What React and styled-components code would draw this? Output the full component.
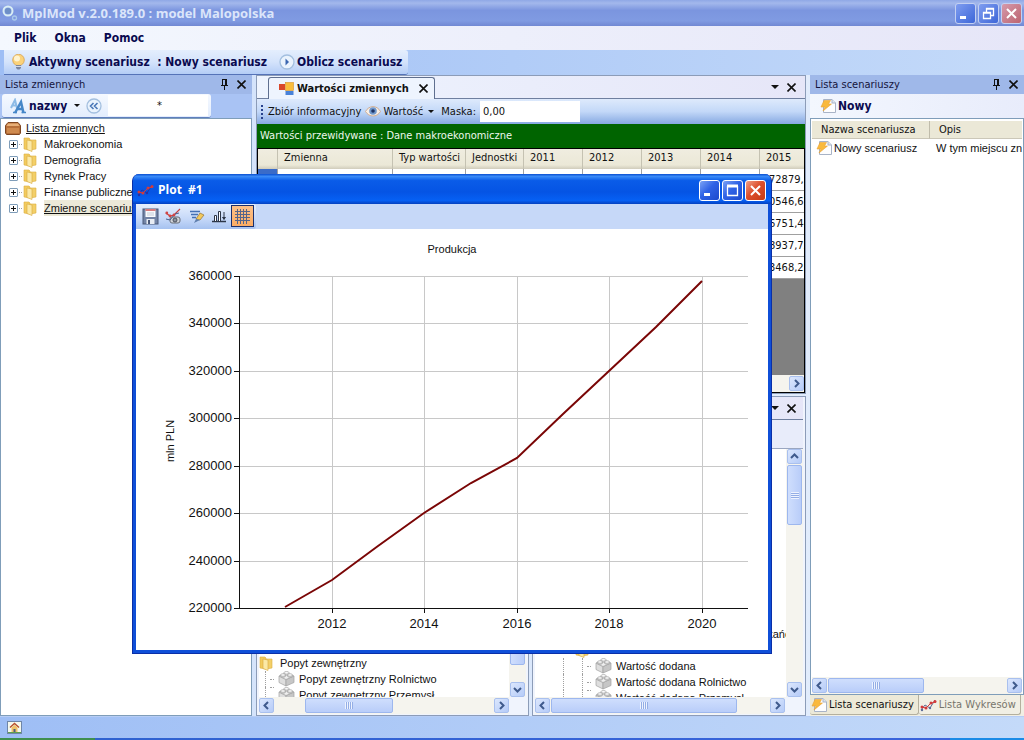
import React from "react";
import styled, { createGlobalStyle, css } from "styled-components";

const Global = createGlobalStyle`
  *, *::before, *::after { box-sizing: border-box; }
  html, body { margin: 0; padding: 0; }
  body { font: 11px/16px "Liberation Sans", Arial, sans-serif; color: #111; overflow: hidden; }
  button, input { font: inherit; color: inherit; margin: 0; padding: 0; border: 0; background: none; }
  button { display: inline-flex; align-items: center; justify-content: center; white-space: nowrap; }
  ul { margin: 0; padding: 0; list-style: none; }
  svg { display: block; flex: none; }
`;

const uiFont = css`font-family: "DejaVu Sans Condensed", "DejaVu Sans", Tahoma, sans-serif;`;

/* ---------- frame ---------- */
const Shell = styled.div`
  position: relative;
  min-height: 100vh;
  display: flex;
  flex-direction: column;
  background: linear-gradient(90deg, #9ebef5, #c4daf9);
`;
const TitleBar = styled.header`
  height: 26px;
  display: flex;
  align-items: center;
  gap: 4px;
  padding: 0 2px;
  background: linear-gradient(#8fa8e6 0, #a3b8ec 12%, #7b95df 40%, #809be2 80%, #7188d3 100%);
  color: #dbe5fa;
`;
const TitleText = styled.h1`
  flex: 1;
  margin: 0;
  font: bold 13px/24px "Open Sans", "Noto Sans", sans-serif;
`;
const CaptionButtons = styled.div`display: flex; gap: 2px;`;
const CaptionButton = styled.button`
  width: 21px;
  height: 21px;
  border: 1px solid ${p => (p.$active ? "#fff" : "#c3d0f2")};
  border-radius: 3px;
  background: ${p => p.$close
    ? (p.$active ? "linear-gradient(135deg, #f0a088, #dd4f2c 45%, #c63a14)" : "linear-gradient(135deg, #d59aab, #bd6470)")
    : (p.$active ? "linear-gradient(135deg, #7ba2f5, #2f62e6 45%, #1c49cc)" : "linear-gradient(135deg, #7f9df0, #3d66d8)")};
`;
const MenuBar = styled.nav`
  height: 24px;
  display: flex;
  align-items: center;
  gap: 18px;
  padding-left: 14px;
  background: linear-gradient(90deg, #f4f8fe, #e6e6f8);
`;
const BoldButton = styled.button`
  ${uiFont}
  font-size: 12px;
  font-weight: bold;
  color: #0a0a50;
  gap: ${p => p.$gap || 0}px;
`;
const ToolRow = styled.div`height: 25px; display: flex; padding-left: 4px;`;
const ToolStrip = styled.div`
  height: 25px;
  display: flex;
  align-items: center;
  padding: 0 6px 0 7px;
  gap: 12px;
  background: linear-gradient(#e4eefd, #d4e3fb 50%, #b4cdf6);
  border-bottom: 1px solid #5573b8;
  border-radius: 0 3px 3px 0;
`;
const Main = styled.main`
  flex: 1;
  display: grid;
  grid-template-columns: 252px minmax(0, 1fr) 214px;
  gap: 4px;
  background: linear-gradient(90deg, #cfe0fb, #e6effc);
`;
const StatusBar = styled.footer`
  height: 22px;
  display: flex;
  align-items: center;
  padding-left: 7px;
  border-top: 1px solid #b7cdf5;
`;
const TaskEdge = styled.div`
  height: 2px;
  background: linear-gradient(90deg, #3f8f4f 95px, #2f62d0 95px, #3a64dc 950px, #1b8be6 950px);
`;

/* ---------- dock panels ---------- */
const Dock = styled.section`display: flex; flex-direction: column; min-width: 0;`;
const DockHead = styled.div`
  ${uiFont}
  height: 19px;
  display: flex;
  align-items: center;
  gap: 8px;
  padding: 0 6px 0 5px;
  background: #9fb8e9;
  h2 { flex: 1; margin: 0; font-size: 11px; font-weight: normal; color: #14143c; }
`;
const DockTools = styled.div`
  height: 24px;
  display: flex;
  align-items: center;
  background: ${p => (p.$light ? "linear-gradient(90deg, #f3f7fe, #e8ecfb)" : "#a9c3f4")};
  padding-left: ${p => (p.$light ? 10 : 2)}px;
`;
const SearchStrip = styled.div`
  height: 24px;
  display: flex;
  align-items: center;
  gap: 6px;
  padding: 0 3px 0 8px;
  background: linear-gradient(#f5f9ff, #e3edfd);
  border-bottom: 1px solid #5f7fbe;
  border-radius: 3px;
`;
const Field = styled.input`
  width: 100px;
  height: 21px;
  background: #fff;
  text-align: ${p => p.$align || "left"};
  padding-left: 3px;
  ${uiFont}
  font-size: 11px;
`;
const Sunken = styled.div`
  flex: 1;
  min-height: 0;
  display: flex;
  flex-direction: column;
  background: #fff;
  border: 1px solid #7f9db9;
  padding: ${p => p.$pad || "0"};
  overflow: hidden;
`;

/* ---------- tree ---------- */
const Tree = styled.ul`
  flex: 1;
  min-width: 0;
  display: flex;
  flex-direction: column;
  justify-content: ${p => (p.$bottom ? "flex-end" : "flex-start")};
  overflow: hidden;
`;
const TreeRow = styled.li`
  height: ${p => p.$cut || 16}px;
  flex: none;
  display: flex;
  align-items: ${p => (p.$cut ? "flex-start" : "center")};
  justify-content: ${p => (p.$end ? "flex-end" : "flex-start")};
  overflow: hidden;
  white-space: nowrap;
  padding-left: ${p => p.$indent || 0}px;
  gap: ${p => p.$gap || 4}px;
`;
const TreeLabel = styled.span`
  text-decoration: ${p => (p.$line ? "underline" : "none")};
  background: ${p => (p.$hot ? "#ece9d8" : "transparent")};
  margin-left: ${p => p.$ml || 0}px;
  margin-right: ${p => (p.$spill ? -10 : 0)}px;
`;
const Expander = styled.button`
  width: 9px;
  height: 9px;
  border: 1px solid #7f9db9;
  border-radius: 1px;
  background: #fff;
`;
const Dots = styled.span`
  width: ${p => p.$w}px;
  border-top: 1px dotted #a0a0a0;
`;
const Stem = styled.span`
  align-self: stretch;
  width: 1px;
  border-left: 1px dotted #a0a0a0;
  margin-right: ${p => p.$mr || 0}px;
`;

/* ---------- documents ---------- */
const Center = styled.div`display: flex; flex-direction: column; gap: 2px; min-width: 0;`;
const DocPane = styled.section`
  display: flex;
  flex-direction: column;
  min-width: 0;
  background: #f0f4fd;
  border: 1px solid #8c9cb8;
  padding: ${p => p.$pad || "0"};
`;
const TabStrip = styled.div`
  height: 23px;
  display: flex;
  align-items: flex-end;
  justify-content: flex-end;
  background: linear-gradient(90deg, #eef4fe, #e6e6f8);
  border-bottom: 1px solid #6f7f9f;
`;
const Tab = styled.button`
  ${uiFont}
  height: 22px;
  margin: 0 auto -1px 11px;
  padding: 0 6px 0 10px;
  gap: 3px;
  font-weight: bold;
  font-size: 11px;
  background: #eef4fe;
  border: 1px solid #5f6f8f;
  border-bottom: 0;
  border-radius: 3px 3px 0 0;
`;
const StripIcons = styled.div`
  display: flex;
  align-items: center;
  align-self: center;
  gap: 8px;
  padding-right: ${p => p.$pr || 9}px;
`;
const DataTools = styled.div`
  ${uiFont}
  height: 25px;
  display: flex;
  align-items: center;
  padding-left: 4px;
  gap: 4px;
  background: linear-gradient(#deeafc, #c3d8f8 50%, #86a9e2);
  white-space: nowrap;
  label { margin-left: 3px; }
`;
const ValueButton = styled.button`gap: 2px;`;
const Grip = styled.i`
  width: 2px;
  height: 14px;
  background: repeating-linear-gradient(#27418c 0 2px, transparent 2px 4px);
  margin-right: 1px;
`;
const Banner = styled.div`
  ${uiFont}
  height: 24px;
  line-height: 22px;
  padding: 1px 0 0 3px;
  background: #006400;
  color: #eef7ee;
`;
const GridBox = styled.div`
  height: 245px;
  display: flex;
  flex-direction: column;
  background: #808080;
  border: 1px solid #000;
  overflow: hidden;
`;
const DataTable = styled.table`
  ${uiFont}
  width: 561px;
  table-layout: fixed;
  border-collapse: separate;
  border-spacing: 0;
  th {
    height: 20px;
    padding: 0 0 2px 6px;
    text-align: left;
    font-weight: normal;
    white-space: nowrap;
    background: linear-gradient(#f0ede0, #ebe8d7 80%, #d0ccbb);
    border-right: 1px solid #c5c2b2;
  }
  td {
    height: 22px;
    padding: 1px 0 0 9px;
    background: #fff;
    border-right: 1px solid #a0a0a0;
    border-bottom: 1px solid #a0a0a0;
    white-space: nowrap;
  }
  td:first-child { background: #3a6bc8; }
`;
const Spacer = styled.div`flex: 1;`;

/* ---------- scroll bars ---------- */
const Scroll = styled.div`
  flex: none;
  display: flex;
  flex-direction: ${p => (p.$v ? "column" : "row")};
  ${p => (p.$v ? "width: 17px;" : "height: 17px;")}
  background: #f5f4ee;
  gap: 1px;
  padding: ${p => (p.$v ? "0 1px" : "1px 0")};
  margin-right: ${p => p.$corner || 0}px;
`;
const ScrollButton = styled.button`
  flex: none;
  width: 15px;
  height: 15px;
  border: 1px solid #a9c0ee;
  border-radius: 2px;
  background: linear-gradient(135deg, #dce7fd, #b5cbf8);
`;
const Thumb = styled.div`
  flex: none;
  display: flex;
  align-items: center;
  justify-content: center;
  ${p => (p.$v ? `height: ${p.$size}px;` : `width: ${p.$size}px;`)}
  ${p => (p.$v ? "margin-top" : "margin-left")}: ${p => p.$at || 0}px;
  border: 1px solid #9db7ee;
  border-radius: 2px;
  background: linear-gradient(${p => (p.$v ? "90deg" : "180deg")}, #cfdefd, #b9cdf9);
`;
const ThumbGrip = styled.i`
  width: 8px;
  height: 7px;
  background: repeating-linear-gradient(${p => (p.$v ? "180deg" : "90deg")}, #eef3fe 0 1px, #94aee6 1px 2px);
`;
const Chevron = ({ d }) => (
  <svg width="9" height="9" viewBox="0 0 9 9" fill="none" stroke="#3f5a8c" strokeWidth="2">
    <path d={{ l: "M6 1 2.500 4.500 6 8", r: "M3 1 6.500 4.500 3 8", u: "M1 6 4.500 2.500 8 6", d: "M1 3 4.500 6.500 8 3" }[d]} />
  </svg>
);
const ScrollBar = ({ v, size, at, corner }) => (
  <Scroll $v={v} $corner={corner}>
    <ScrollButton aria-label="Back"><Chevron d={v ? "u" : "l"} /></ScrollButton>
    <Thumb $v={v} $size={size} $at={at}><ThumbGrip $v={v} /></Thumb>
    <Spacer />
    <ScrollButton aria-label="Forward"><Chevron d={v ? "d" : "r"} /></ScrollButton>
  </Scroll>
);

const LowerRow = styled.div`
  flex: 1;
  min-height: 0;
  display: grid;
  grid-template-columns: 273px minmax(0, 1fr);
  gap: 3px;
`;
const TreeArea = styled.div`flex: 1; min-height: 0; display: flex; background: #fff;`;
const Blank = styled.div`height: 29px; background: #e8ecfa; border-bottom: 1px solid #9aa6c0;`;

/* ---------- scenario list ---------- */
const ScenarioTable = styled.table`
  width: 100%;
  table-layout: fixed;
  border-collapse: separate;
  border-spacing: 0;
  th {
    ${uiFont}
    height: 18px;
    padding: 0 0 0 9px;
    text-align: left;
    font-weight: normal;
    background: #ebe8d7;
    border-bottom: 1px solid #cbc7b8;
    white-space: nowrap;
  }
  th + th { border-left: 1px solid #c0bcab; }
  td { height: 18px; padding: 0 0 0 7px; white-space: nowrap; overflow: hidden; }
  td:first-child { padding-left: 4px; }
`;
const CellFlex = styled.div`display: flex; align-items: center; gap: 2px;`;
const BottomTabs = styled.div`height: 21px; display: flex; background: #f1efe4; overflow: hidden;`;
const BottomTab = styled.button`
  ${uiFont}
  flex: none;
  height: 20px;
  gap: 2px;
  padding: 0 4px 0 1px;
  border: 1px solid #b4b09e;
  border-width: 0 1px 1px 0;
  border-radius: 0 0 3px 3px;
  background: ${p => (p.$on ? "#ece9d8" : "transparent")};
  color: ${p => (p.$on ? "#111" : "#77756c")};
`;

/* ---------- plot window ---------- */
const PlotWindow = styled.section`
  position: absolute;
  left: 132px;
  top: 174px;
  width: 640px;
  border-radius: 7px 7px 0 0;
  border: 1px solid #0a2fa8;
  border-width: 0 1px 1px;
  background: #0f4fd8;
  padding: 0 3px 3px;
  overflow: hidden;
`;
const PlotTitle = styled.header`
  height: 30px;
  margin: 0 -3px;
  padding: 2px 5px 0 4px;
  display: flex;
  align-items: center;
  gap: 4px;
  color: #fff;
  background: linear-gradient(#0a4fd0 0, #3a8bf8 8%, #0a5ce8 22%, #0554e4 60%, #0660f4 88%, #0340c0 100%);
  h2 { flex: 1; margin: 0; white-space: pre; font: bold 12px/20px "Open Sans", "Noto Sans", sans-serif; }
`;
const PlotTools = styled.div`
  height: 25px;
  background: #c6d8f8;
  display: flex;
`;
const PlotStrip = styled.div`
  display: flex;
  align-items: center;
  padding: 0 2px 1px 3px;
  background: linear-gradient(#e6effd, #c5d8f8 60%, #a6c2f0);
  border-radius: 0 3px 3px 0;
`;
const ToolButton = styled.button`
  width: 23px;
  height: 22px;
  border: 1px solid ${p => (p.$on ? "#1c2f6c" : "transparent")};
  background: ${p => (p.$on ? "linear-gradient(#fcc088, #fbac64)" : "none")};
`;
const Canvas = styled.div`
  background: #fff;
  svg { width: 100%; height: auto; }
`;

/* ---------- icons ---------- */
const Close = () => <svg width="9" height="9" viewBox="0 0 9 9" stroke="#111" strokeWidth="1.600"><path d="M.5 .5 8.500 8.500M8.500 .5 .5 8.500" /></svg>;
const Pin = () => <svg width="9" height="11" viewBox="0 0 9 11" fill="none" stroke="#111"><path d="M2.500 1V6M2 .5H7M5.500 1V6M6.500 1V6M1 6.500H8M4.500 7V11" /></svg>;
const Down = ({ w = 6 }) => <svg width={w} height={w / 2} viewBox="0 0 8 4"><path d="M0 0H8L4 4Z" fill="#111" /></svg>;
const CapIcon = ({ k }) => (
  <svg width="15" height="15" viewBox="0 0 15 15" fill="none" stroke="#fff" strokeWidth="2">
    {k === "min" && <path d="M2 11.500H8" strokeWidth="3" />}
    {k === "max" && <path d="M2.500 3V12.500H12.500V3" strokeWidth="1.300" />}
    {k === "max" && <path d="M2 3H13" strokeWidth="3" />}
    {k === "restore" && <path d="M5.500 6V2.500H12.500V9.500H10M2.500 6.500H9.500V12.500H2.500ZM5 3H13M2 7H10" strokeWidth="1.300" />}
    {k === "close" && <path d="M3 3 12 12M12 3 3 12" />}
  </svg>
);
const Bulb = () => (
  <svg width="16" height="16" viewBox="0 0 16 16"><circle cx="7.500" cy="6" r="5.800" fill="#fbd27a" stroke="#d59a3c" strokeWidth=".7" /><circle cx="6" cy="4.500" r="3" fill="#fff3cf" /><path d="M5 11H10V14L8.500 15.500H6.500L5 14Z" fill="#7b86a0" /><path d="M5 12.500H10" stroke="#d5dbe8" /></svg>
);
const Round = ({ d }) => (
  <svg width="16" height="16" viewBox="0 0 16 16"><circle cx="8" cy="8" r="7" fill="#eaf3fd" stroke="#a3bfdf" strokeWidth="1.300" />{d === "play" ? <path d="M6.500 4.500 10 8 6.500 11.500Z" fill="#3a66b0" /> : <path d="M7.500 5 4.500 8 7.500 11M11.500 5 8.500 8 11.500 11" fill="none" stroke="#4b78b8" strokeWidth="1.600" />}</svg>
);
const Letters = () => (
  <svg width="16" height="16" viewBox="0 0 16 16" fill="none"><path d="M1 10 5 2 7 10M3 7.500H7" stroke="#8dbbe6" strokeWidth="2" /><path d="M5 15 11 4 13.500 15M7.500 11H13" stroke="#4687c8" strokeWidth="2.500" /><path d="M3 14.500H7M11.500 14.500H16" stroke="#4687c8" strokeWidth="1.500" /></svg>
);
const Folder = () => (
  <svg width="14" height="15" viewBox="0 0 14 15"><path d="M1 1H6L7 2V13L1 12Z" fill="#f2cb5e" stroke="#dcae42" strokeWidth=".6" /><path d="M7 3H13V12L7 13Z" fill="#f3cf68" stroke="#dcae42" strokeWidth=".6" /><path d="M4 3 9 4V14.500L4 12.500Z" fill="#fbe9a6" stroke="#d6a93e" strokeWidth=".6" /></svg>
);
const Drawer = () => (
  <svg width="16" height="13" viewBox="0 0 16 13"><path d="M3 .5H13L15.500 3.500V11L14.500 12.500H1.500L.5 11V3.500Z" fill="#b8703a" stroke="#7f4620" /><path d="M3 1.500H13L14.500 4H1.500Z" fill="#e8b078" /><path d="M2 6H14V11H2Z" fill="#cf8a4e" /></svg>
);
const Brick = () => (
  <svg width="17" height="16" viewBox="0 0 17 16" stroke="#a2a2a2" strokeWidth=".7"><path d="M1 5 8 8.500V15L1 11.500Z" fill="#dedede" /><path d="M8 8.500 16 5V11.500L8 15Z" fill="#c6c6c6" /><path d="M1 5 8 2 16 5 8 8.500Z" fill="#eee" /><path d="M2.500 4V5A2.500 1.300 0 0 0 7.500 5V4M9.500 4V5A2.500 1.300 0 0 0 14.500 5V4M6 1.800V3A2.500 1.300 0 0 0 11 3V1.800" fill="#e2e2e2" /><ellipse cx="5" cy="4" rx="2.500" ry="1.300" fill="#fafafa" /><ellipse cx="12" cy="4" rx="2.500" ry="1.300" fill="#fafafa" /><ellipse cx="8.500" cy="1.800" rx="2.500" ry="1.300" fill="#fafafa" /></svg>
);
const Bolt = () => (
  <svg width="16" height="16" viewBox="0 0 16 16"><path d="M3.500 1.500H12L15.500 5V14.500H3.500Z" fill="#fdfdfe" stroke="#a8b3c6" /><path d="M12 1.500V5H15.500" fill="#dfe6f2" stroke="#a8b3c6" /><path d="M4 2.500H10.500L8.500 6H11.500L3 13 5 9H1Z" fill="#f9b93c" stroke="#e8a236" strokeWidth=".6" /></svg>
);
const Eye = () => (
  <svg width="16" height="13" viewBox="0 0 16 13"><path d="M.5 6.500C4 0 12 0 15.500 6.500 12 12.500 4 12.500 .5 6.500Z" fill="#f8efe6" stroke="#d0ad92" /><circle cx="8" cy="6" r="3.800" fill="#6f97cc" /><circle cx="8" cy="6" r="1.800" fill="#1d3262" /></svg>
);
const FormIcon = () => (
  <svg width="15" height="14" viewBox="0 0 15 14"><rect x="6.500" y=".5" width="8" height="8" fill="#f9bd3c" stroke="#d6912a" strokeWidth=".6" /><rect x="0" y="2" width="6" height="6" fill="#d9472b" /><rect x="6.500" y="9" width="8" height="4" fill="#4a82d8" /></svg>
);
const PlotIcon = ({ c = "#5c6c98" }) => (
  <svg width="17" height="14" viewBox="0 0 17 14" fill="none"><path d="M1 12 5 7 10 10 15 2" stroke={c} /><path d="M1 9 6 10 11 5 16 4" stroke="#d23b3b" /><g fill="#d23b3b"><circle cx="2" cy="9" r="1.500" /><circle cx="6" cy="10" r="1.500" /><circle cx="11" cy="5" r="1.500" /><circle cx="15" cy="3.500" r="1.500" /></g><g fill={c}><circle cx="2" cy="12" r="1.200" /><circle cx="10" cy="10" r="1.200" /></g></svg>
);
const AppIcon = () => <svg width="16" height="17" viewBox="0 0 16 17" fill="none"><circle cx="6" cy="6" r="4.500" stroke="#d9eef4" strokeWidth="2" /><circle cx="6" cy="6" r="3" fill="#6d8fc6" /><circle cx="12.500" cy="13" r="2" stroke="#a9c9ea" strokeWidth="1.300" /></svg>;
const House = () => <svg width="15" height="13" viewBox="0 0 15 13"><rect x=".5" y=".5" width="14" height="12" fill="#f4f8ee" stroke="#6f86a8" /><path d="M3 6.500 7.500 2.500 12 6.500" fill="none" stroke="#b8502e" strokeWidth="1.500" /><path d="M4.500 6.500V11H10.500V6.500L7.500 4Z" fill="#eec36b" /><path d="M6.500 8H8.500V11H6.500Z" fill="#4e5d80" /><path d="M1 11.500H14" stroke="#5fa04e" /></svg>;
const Save = () => <svg width="17" height="17" viewBox="0 0 17 17"><rect x="1" y="1" width="15" height="15" fill="#7384a6" stroke="#4a5878" /><rect x="3.500" y="1" width="10" height="8" fill="#fafbfd" /><path d="M3.500 2H13.500" stroke="#cc5050" strokeWidth="1.500" /><path d="M5 5H12M5 7H12" stroke="#c3cbd9" /><rect x="4.500" y="11" width="8" height="5" fill="#e8ecf3" /><rect x="6" y="12" width="2" height="4" fill="#4a5878" /></svg>;
const CopyPlot = () => <svg width="17" height="17" viewBox="0 0 17 17" fill="none"><rect x="5" y="9" width="10" height="6" rx="2" fill="#d0d3d8" stroke="#686e78" /><circle cx="10" cy="12" r="2" fill="#8a929f" stroke="#4b525e" /><path d="M1 5 5 8 9 7 15 1" stroke="#c94242" strokeWidth="1.200" /><path d="M1 11 5 12 10 6 14 5" stroke="#4b608d" /><g fill="#d04545"><circle cx="1.800" cy="5" r="1.400" /><circle cx="5" cy="8" r="1.400" /><circle cx="9" cy="7" r="1.400" /></g></svg>;
const EditIcon = () => <svg width="17" height="17" viewBox="0 0 17 17" fill="none"><path d="M2 3.500H12M3 6.500H10M4 9.500H8" stroke="#4470b4" strokeWidth="1.700" /><path d="M8 11 12 5 16 7 12 12Z" fill="#f3c95c" stroke="#907238" strokeWidth=".7" /><path d="M8 11 12 12 6 15Z" fill="#5f7fae" /></svg>;
const Bars = () => <svg width="15" height="15" viewBox="0 0 15 15" fill="none" stroke="#2c3648"><path d="M0 12.500H14" strokeWidth="1.500" /><path d="M2.500 12V6.500H4.500V12M6.500 12V2.500H8.500V12M12 3V10" fill="#fff" /><path d="M10.500 8 12 10.500 13.500 8" fill="#2c3648" /></svg>;
const GridIcon = () => <svg width="15" height="15" viewBox="0 0 15 15" stroke="#56658a"><path d="M0 2.500H15M0 5.500H15M0 8.500H15M0 11.500H15M2.500 0V15M5.500 0V15M8.500 0V15M11.500 0V15" /></svg>;
const Plus = () => <svg width="7" height="7" viewBox="0 0 7 7" stroke="#111"><path d="M1 3.500H6M3.500 1V6" /></svg>;

/* ---------- chart ---------- */
const years = [2012, 2014, 2016, 2018, 2020];
const ticks = [360000, 340000, 320000, 300000, 280000, 260000, 240000, 220000];
const series = [[2011, 220400], [2012, 231800], [2013, 246000], [2014, 260200], [2015, 272600], [2016, 283300], [2017, 301700], [2018, 319900], [2019, 338500], [2020, 357900]];
const px = y => Math.round(103 + (y - 2010) * 46.3);
const py = v => Math.round(379 - (v - 220000) * 332 / 140000);

const Chart = () => (
  <svg viewBox="0 0 632 421" role="img" aria-label="Produkcja" fontFamily="Liberation Sans, Arial, sans-serif" fill="#111">
    <g stroke="#c8c8c8" shapeRendering="crispEdges">
      {ticks.slice(0, -1).map(t => <path key={t} d={`M104 ${py(t)}.5H612`} />)}
      {years.map(y => <path key={y} d={`M${px(y)}.5 47V379`} />)}
    </g>
    <g stroke="#111" shapeRendering="crispEdges">
      <path d="M103.500 47V380M103 379.500H612" />
      {ticks.map(t => <path key={t} d={`M98 ${py(t)}.5H103`} />)}
      {years.map(y => <path key={y} d={`M${px(y)}.5 379V384`} />)}
    </g>
    <polyline fill="none" stroke="#7a0606" strokeWidth="2" points={series.map(([x, v]) => `${px(x)},${py(v)}`).join(" ")} />
    <g fontSize="13" textAnchor="end">{ticks.map(t => <text key={t} x="96" y={py(t) + 4}>{t}</text>)}</g>
    <g fontSize="13" textAnchor="middle">{years.map(y => <text key={y} x={px(y)} y="399">{y}</text>)}</g>
    <text x="316" y="24" fontSize="11" textAnchor="middle">Produkcja</text>
    <text transform="translate(38 212) rotate(-90)" fontSize="11" textAnchor="middle">mln PLN</text>
  </svg>
);

const folders = ["Makroekonomia", "Demografia", "Rynek Pracy", "Finanse publiczne", "Zmienne scenariuszowe"];
const values = ["72879,1", "0546,67", "6751,44", "8937,72", "3468,25"];
const columns = [["", 20], ["Zmienna", 115], ["Typ wartości", 73], ["Jednostki", 58], ["2011", 59], ["2012", 59], ["2013", 59], ["2014", 59], ["2015", 59]];

export default function App() {
  return (
    <Shell>
      <Global />
      <TitleBar>
        <AppIcon />
        <TitleText>MplMod v.2.0.189.0 : model Malopolska</TitleText>
        <CaptionButtons>
          <CaptionButton aria-label="Minimize"><CapIcon k="min" /></CaptionButton>
          <CaptionButton aria-label="Restore"><CapIcon k="restore" /></CaptionButton>
          <CaptionButton $close aria-label="Close"><CapIcon k="close" /></CaptionButton>
        </CaptionButtons>
      </TitleBar>
      <MenuBar>
        <BoldButton>Plik</BoldButton>
        <BoldButton>Okna</BoldButton>
        <BoldButton>Pomoc</BoldButton>
      </MenuBar>
      <ToolRow>
        <ToolStrip>
          <BoldButton $gap={2}><Bulb /><span>Aktywny scenariusz &nbsp;: Nowy scenariusz</span></BoldButton>
          <BoldButton $gap={2}><Round d="play" />Oblicz scenariusz</BoldButton>
        </ToolStrip>
      </ToolRow>

      <Main>
        <Dock>
          <DockHead><h2>Lista zmiennych</h2><Pin /><Close /></DockHead>
          <DockTools>
            <SearchStrip>
              <BoldButton $gap={3}><Letters />nazwy&nbsp;<Down /></BoldButton>
              <button aria-label="Wyczyść"><Round /></button>
              <Field aria-label="Filtr" $align="center" defaultValue="*" />
            </SearchStrip>
          </DockTools>
          <Sunken $pad="1px 0 0 4px">
            <Tree>
              <TreeRow $gap={5}><Drawer /><TreeLabel $line>Lista zmiennych</TreeLabel></TreeRow>
              {folders.map((f, i) => (
                <TreeRow key={f} $indent={4} $gap={1}>
                  <Expander aria-label={f}><Plus /></Expander>
                  <Dots $w={3} />
                  <Folder />
                  <TreeLabel $ml={6} $line={i === 4} $hot={i === 4}>{f}</TreeLabel>
                </TreeRow>
              ))}
            </Tree>
          </Sunken>
        </Dock>

        <Center>
          <DocPane>
            <TabStrip>
              <Tab><FormIcon />Wartości zmiennych&nbsp;&nbsp;<Close /></Tab>
              <StripIcons><Down w={8} /><Close /></StripIcons>
            </TabStrip>
            <DataTools>
              <Grip />
              <button>Zbiór informacyjny</button>
              <ValueButton><Eye />Wartość&nbsp;<Down /></ValueButton>
              <label htmlFor="mask">Maska:</label>
              <Field id="mask" defaultValue="0,00" />
            </DataTools>
            <Banner>Wartości przewidywane : Dane makroekonomiczne</Banner>
            <GridBox>
              <DataTable>
                <colgroup>{columns.map(([n, w]) => <col key={n} width={w} />)}</colgroup>
                <thead><tr>{columns.map(([n]) => <th key={n}>{n}</th>)}</tr></thead>
                <tbody>
                  {values.map(v => <tr key={v}>{columns.map(([n], c) => <td key={n}>{c === 8 ? v : ""}</td>)}</tr>)}
                </tbody>
              </DataTable>
              <Spacer />
              <ScrollBar size={180} />
            </GridBox>
          </DocPane>
          <LowerRow>
            <DocPane $pad="0 2px 1px">
              <TabStrip />
              <Blank />
              <TreeArea>
                <Tree $bottom>
                  <TreeRow $gap={7}><Folder />Popyt zewnętrzny</TreeRow>
                  <TreeRow $indent={6}><Stem /><Dots $w={4} /><Brick />Popyt zewnętrzny Rolnictwo</TreeRow>
                  <TreeRow $indent={6} $cut={10}><Stem /><Dots $w={4} /><Brick />Popyt zewnętrzny Przemysł</TreeRow>
                </Tree>
                <ScrollBar v size={58} at={142} />
              </TreeArea>
              <ScrollBar size={88} at={30} corner={17} />
            </DocPane>
            <DocPane $pad="0 2px 1px">
              <TabStrip><StripIcons $pr={7}><Down w={8} /><Close /></StripIcons></TabStrip>
              <Blank />
              <TreeArea>
                <Tree $bottom>
                  <TreeRow $end><TreeLabel $spill>mieszkańcy</TreeLabel></TreeRow>
                  <TreeRow $indent={40}><Folder /></TreeRow>
                  <TreeRow $indent={28}><Stem $mr={14} /><Stem /><Dots $w={4} /><Brick />Wartość dodana</TreeRow>
                  <TreeRow $indent={28}><Stem $mr={14} /><Stem /><Dots $w={4} /><Brick />Wartość dodana Rolnictwo</TreeRow>
                  <TreeRow $indent={28} $cut={7}><Stem $mr={14} /><Stem /><Dots $w={4} /><Brick />Wartość dodana Przemysł</TreeRow>
                </Tree>
                <ScrollBar v size={60} />
              </TreeArea>
              <ScrollBar size={186} corner={18} />
            </DocPane>
          </LowerRow>
        </Center>

        <Dock>
          <DockHead><h2>Lista scenariuszy</h2><Pin /><Close /></DockHead>
          <DockTools $light><BoldButton $gap={2}><Bolt />Nowy</BoldButton></DockTools>
          <Sunken $pad="2px 1px 0">
            <ScenarioTable>
              <colgroup><col width="117" /><col /></colgroup>
              <thead><tr><th>Nazwa scenariusza</th><th>Opis</th></tr></thead>
              <tbody><tr><td><CellFlex><Bolt />Nowy scenariusz</CellFlex></td><td>W tym miejscu znajduje się opis</td></tr></tbody>
            </ScenarioTable>
            <Spacer />
            <ScrollBar size={96} />
          </Sunken>
          <BottomTabs>
            <BottomTab $on><Bolt />Lista scenariuszy</BottomTab>
            <BottomTab><PlotIcon />Lista Wykresów</BottomTab>
          </BottomTabs>
        </Dock>
      </Main>

      <StatusBar><House /></StatusBar>
      <TaskEdge />

      <PlotWindow>
        <PlotTitle>
          <PlotIcon c="#2233aa" />
          <h2>Plot  #1</h2>
          <CaptionButtons>
            <CaptionButton $active aria-label="Minimize"><CapIcon k="min" /></CaptionButton>
            <CaptionButton $active aria-label="Maximize"><CapIcon k="max" /></CaptionButton>
            <CaptionButton $active $close aria-label="Close"><CapIcon k="close" /></CaptionButton>
          </CaptionButtons>
        </PlotTitle>
        <PlotTools>
          <PlotStrip>
            <ToolButton aria-label="Zapisz"><Save /></ToolButton>
            <ToolButton aria-label="Kopiuj"><CopyPlot /></ToolButton>
            <ToolButton aria-label="Edytuj"><EditIcon /></ToolButton>
            <ToolButton aria-label="Typ"><Bars /></ToolButton>
            <ToolButton $on aria-label="Siatka"><GridIcon /></ToolButton>
          </PlotStrip>
        </PlotTools>
        <Canvas><Chart /></Canvas>
      </PlotWindow>
    </Shell>
  );
}
